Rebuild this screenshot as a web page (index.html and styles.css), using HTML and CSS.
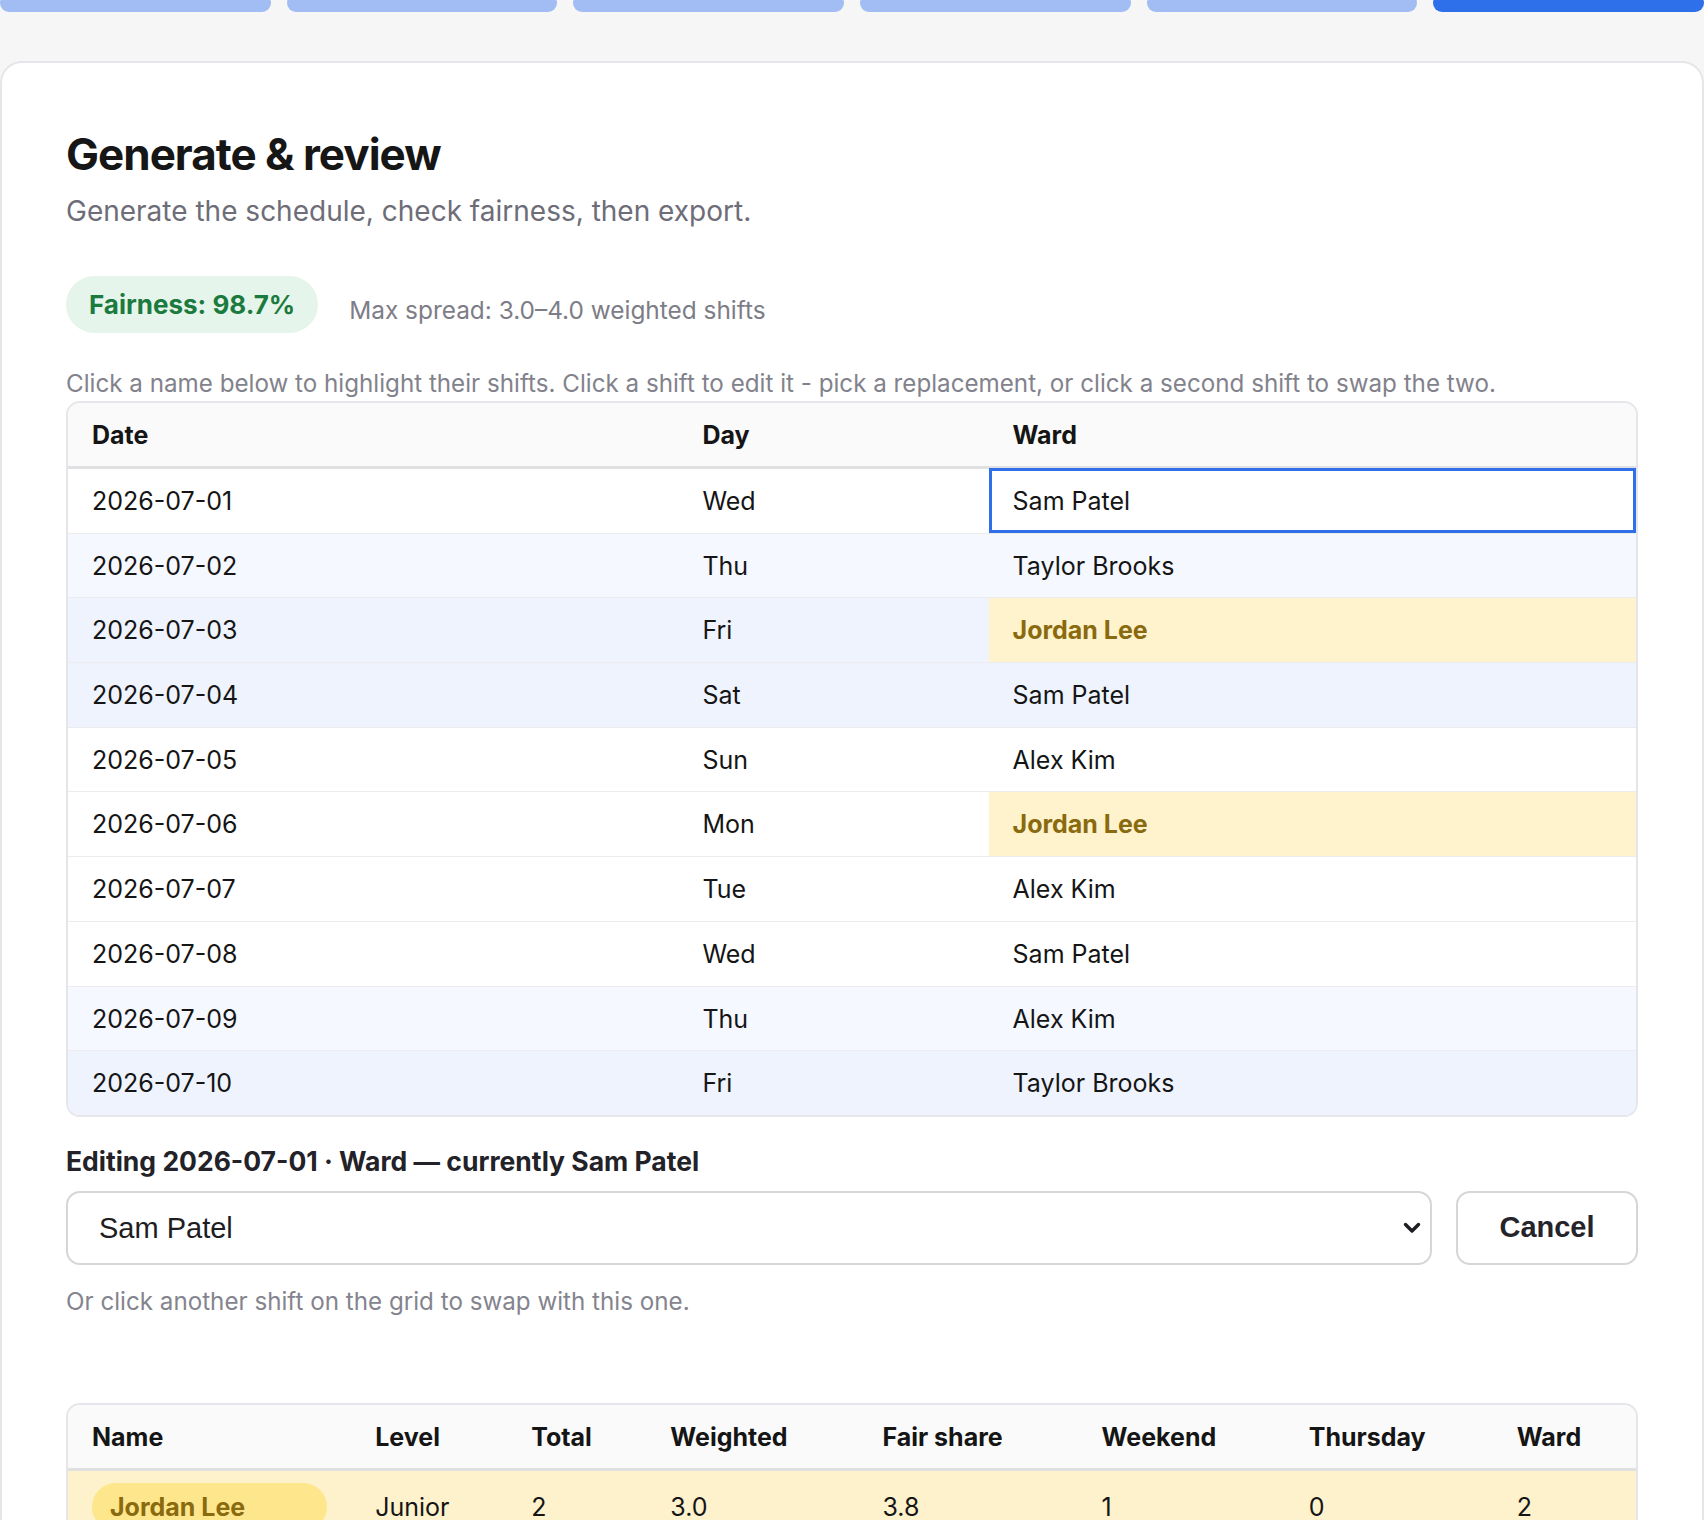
FILE: index.html
```html
<!DOCTYPE html>
<html lang="en">
<head>
  <meta charset="UTF-8" />
  <meta name="viewport" content="width=device-width, initial-scale=1.0"/>
  <title>Rota - Generate &amp; review</title>
  <link rel="stylesheet" href="styles.css">
</head>
<body>
  <div class="steps">
    <span class="step"></span>
    <span class="step"></span>
    <span class="step"></span>
    <span class="step"></span>
    <span class="step"></span>
    <span class="step active"></span>
  </div>

  <main class="card">
    <h1 class="title">Generate &amp; review</h1>
    <p class="lead">Generate the schedule, check fairness, then export.</p>

    <div class="score-row">
      <span class="score">Fairness: 98.7%</span>
      <span class="spread">Max spread: 3.0–4.0 weighted shifts</span>
    </div>

    <p class="hint">Click a name below to highlight their shifts. Click a shift to edit it - pick a replacement, or click a second shift to swap the two.</p>

    <div class="table-wrap">
      <table class="grid">
        <colgroup>
          <col class="c-date">
          <col class="c-day">
          <col class="c-ward">
        </colgroup>
        <thead>
          <tr><th>Date</th><th>Day</th><th>Ward</th></tr>
        </thead>
        <tbody>
          <tr><td>2026-07-01</td><td>Wed</td><td class="selected">Sam Patel</td></tr>
          <tr class="thu"><td>2026-07-02</td><td>Thu</td><td>Taylor Brooks</td></tr>
          <tr class="wknd"><td>2026-07-03</td><td>Fri</td><td class="mine">Jordan Lee</td></tr>
          <tr class="wknd"><td>2026-07-04</td><td>Sat</td><td>Sam Patel</td></tr>
          <tr><td>2026-07-05</td><td>Sun</td><td>Alex Kim</td></tr>
          <tr><td>2026-07-06</td><td>Mon</td><td class="mine">Jordan Lee</td></tr>
          <tr><td>2026-07-07</td><td>Tue</td><td>Alex Kim</td></tr>
          <tr><td>2026-07-08</td><td>Wed</td><td>Sam Patel</td></tr>
          <tr class="thu"><td>2026-07-09</td><td>Thu</td><td>Alex Kim</td></tr>
          <tr class="wknd"><td>2026-07-10</td><td>Fri</td><td>Taylor Brooks</td></tr>
        </tbody>
      </table>
    </div>

    <div class="edit">
      <div class="edit-label">Editing 2026-07-01 · Ward — currently Sam Patel</div>
      <div class="edit-row">
        <div class="picker-box">
          <select class="picker">
            <option selected>Sam Patel</option>
            <option>Taylor Brooks</option>
            <option>Jordan Lee</option>
            <option>Alex Kim</option>
          </select>
          <svg class="chevron" width="18" height="12" viewBox="0 0 18 12">
            <path d="M2.5 2.5 L9 9 L15.5 2.5" fill="none" stroke="#1d1d22" stroke-width="3.4" stroke-linecap="round" stroke-linejoin="round"/>
          </svg>
        </div>
        <button class="btn">Cancel</button>
      </div>
      <p class="edit-note">Or click another shift on the grid to swap with this one.</p>
    </div>

    <div class="table-wrap stats-wrap">
      <table class="stats">
        <colgroup>
          <col class="s-name">
          <col class="s-level">
          <col class="s-total">
          <col class="s-weighted">
          <col class="s-fair">
          <col class="s-weekend">
          <col class="s-thu">
          <col class="s-ward">
        </colgroup>
        <thead>
          <tr>
            <th>Name</th><th>Level</th><th>Total</th><th>Weighted</th>
            <th>Fair share</th><th>Weekend</th><th>Thursday</th><th>Ward</th>
          </tr>
        </thead>
        <tbody>
          <tr class="picked">
            <td><button class="name-pill">Jordan Lee</button></td>
            <td>Junior</td><td>2</td><td>3.0</td><td>3.8</td><td>1</td><td>0</td><td>2</td>
          </tr>
          <tr>
            <td><button class="name-pill plain">Sam Patel</button></td>
            <td>Senior</td><td>3</td><td>4.0</td><td>3.8</td><td>1</td><td>0</td><td>3</td>
          </tr>
        </tbody>
      </table>
    </div>
  </main>
</body>
</html>
```

FILE: styles.css
```css
* {
  margin: 0;
  padding: 0;
  box-sizing: border-box;
}
html, body {
  width: 100%;
  background-color: #f6f6f6;
  font-family: Inter, "Noto Sans", sans-serif;
  color: #151515;
}

/* barra de pasos */
.steps {
  display: flex;
  gap: 16px;
  margin-top: -6px;
}
.step {
  flex: 1;
  height: 18px;
  border-radius: 9px;
  background-color: #a1bdf4;
}
.step.active {
  background-color: #2e6fea;
}

.card {
  margin-top: 49px;
  background-color: #fff;
  border: 2px solid #e5e5ea;
  border-radius: 22px;
  padding: 65px 64px 64px;
}
.title {
  font-size: 44px;
  line-height: 52px;
  font-weight: 700;
  letter-spacing: -1px;
  color: #161616;
}
.lead {
  margin-top: 12px;
  font-size: 28px;
  line-height: 39px;
  color: #6d6d78;
}

.score-row {
  display: flex;
  align-items: center;
  gap: 31px;
  margin-top: 45px;
}
.score {
  padding: 12px 23px;
  border-radius: 29px;
  background-color: #e6f5eb;
  color: #1b7a3d;
  font-size: 26px;
  line-height: 33px;
  font-weight: 700;
}
.spread {
  padding-top: 10px;
  font-size: 24.4px;
  line-height: 36px;
  color: #7d7d87;
}
.hint {
  margin-top: 34px;
  font-size: 24.2px;
  line-height: 34px;
  color: #82828c;
}

/* tablas */
.table-wrap {
  border: 2px solid #e6e6ea;
  border-radius: 14px;
  overflow: hidden;
}
table {
  width: 100%;
  border-collapse: collapse;
  table-layout: fixed;
  font-size: 25px;
  line-height: 36px;
}
th {
  text-align: left;
  font-weight: 700;
  background-color: #fafafa;
  padding: 14px 24px 13px;
  border-bottom: 3px solid #e0e0e2;
}
td {
  padding: 14px 24px 13.7px;
  border-bottom: 1px solid #ececee;
}
tbody tr:last-child td {
  border-bottom: none;
}
.c-date { width: 610px; }
.c-day { width: 310px; }
.c-ward { width: 647px; }

.grid tr.thu td { background-color: #f5f8ff; }
.grid tr.wknd td { background-color: #eef3fd; }
.grid tr td.mine {
  background-color: #fef3cc;
  color: #8a6a0f;
  font-weight: 700;
}
.grid td.selected {
  outline: 3px solid #2f6fea;
  outline-offset: -3px;
}

/* edicion */
.edit {
  margin-top: 25px;
}
.edit-label {
  font-size: 26.5px;
  line-height: 39px;
  font-weight: 700;
  color: #222228;
}
.edit-row {
  display: flex;
  gap: 24px;
  margin-top: 10px;
}
.picker-box {
  flex: 1;
  position: relative;
}
.picker {
  appearance: none;
  width: 100%;
  height: 74px;
  padding: 0 40px 0 31px;
  border: 2px solid #d6d6da;
  border-radius: 14px;
  background-color: #fff;
  font-family: "Liberation Sans", Arial, sans-serif;
  font-size: 29px;
  color: #1d1d22;
}
.chevron {
  position: absolute;
  right: 11px;
  top: 31px;
  pointer-events: none;
}
.btn {
  width: 182px;
  height: 74px;
  border: 2px solid #d6d6da;
  border-radius: 14px;
  background-color: #fff;
  font-family: "Liberation Sans", Arial, sans-serif;
  font-size: 29px;
  font-weight: 700;
  color: #24242a;
}
.edit-note {
  margin-top: 19px;
  font-size: 24.2px;
  line-height: 36px;
  color: #84848e;
}

.stats-wrap {
  margin-top: 83px;
}
.s-name { width: 283px; }
.s-level { width: 156px; }
.s-total { width: 139px; }
.s-weighted { width: 212px; }
.s-fair { width: 219px; }
.s-weekend { width: 207px; }
.s-thu { width: 208px; }
.s-ward { width: 143px; }
.stats td {
  vertical-align: middle;
}
.stats tr.picked td {
  padding-top: 12px;
  background-color: #fef2cc;
}
.name-pill {
  display: block;
  width: 100%;
  padding: 6px 18px;
  border: none;
  border-radius: 24px;
  background-color: #fde68b;
  color: #8a6a0f;
  font-family: Inter, "Noto Sans", sans-serif;
  font-size: 25px;
  line-height: 36px;
  font-weight: 700;
  text-align: left;
}
.name-pill.plain {
  background-color: transparent;
  color: #151515;
}
```
